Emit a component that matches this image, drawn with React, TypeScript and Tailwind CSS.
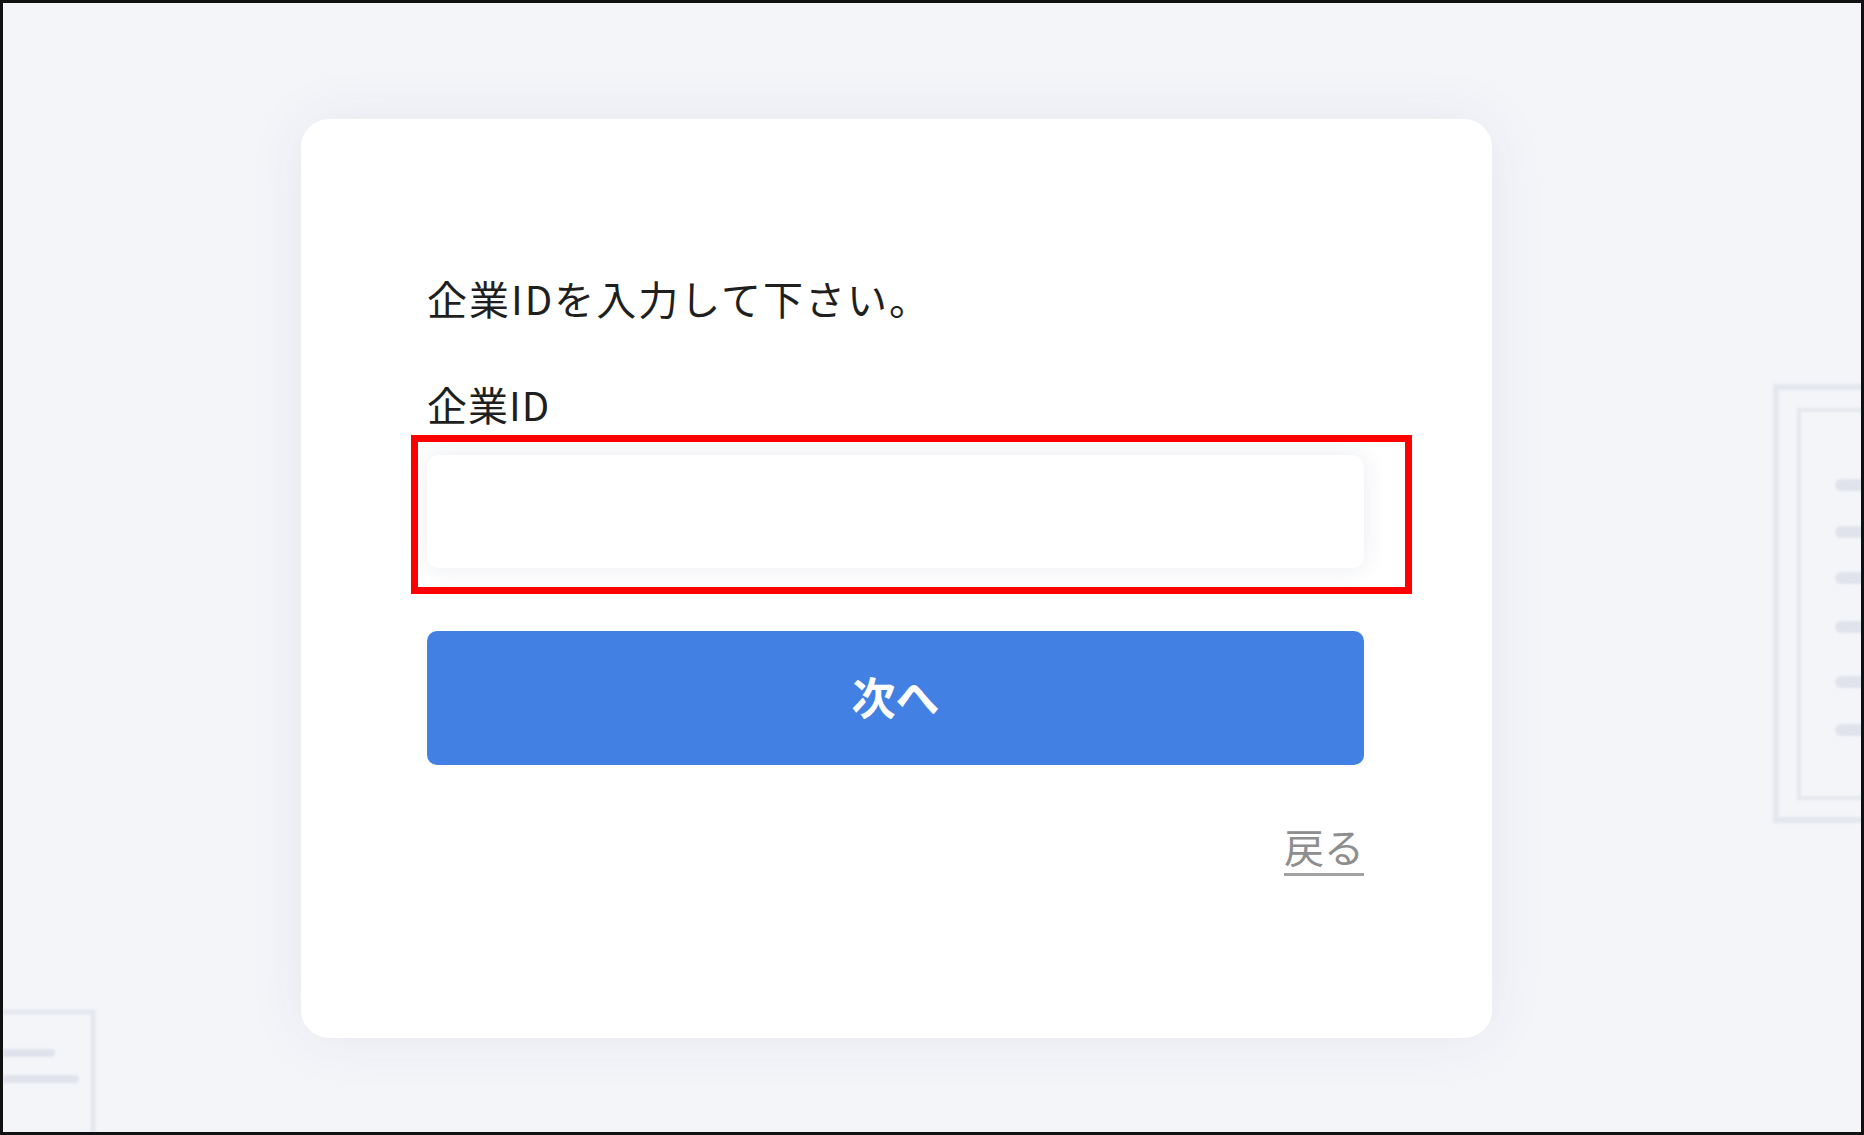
import { useState } from "react";

const font = { fontFamily: '"Noto Sans CJK JP", "Noto Sans", sans-serif' };

const RightDeco = () => (
  <svg
    className="absolute left-[1762px] top-[372px] blur-[1px]"
    width="110"
    height="460"
    viewBox="0 0 110 460"
    fill="none"
  >
    <rect x="11" y="12" width="200" height="433" stroke="#e5e7ef" strokeWidth="6" />
    <rect x="34" y="35" width="200" height="388" stroke="#e5e7ef" strokeWidth="4" />
    {[110, 157, 203, 252, 307, 355].map((y) => (
      <line key={y} x1="76" y1={y} x2="140" y2={y} stroke="#e1e3ec" strokeWidth="12" strokeLinecap="round" />
    ))}
  </svg>
);

const LeftDeco = () => (
  <svg
    className="absolute left-0 top-[997px] blur-[1px]"
    width="110"
    height="140"
    viewBox="0 0 110 140"
    fill="none"
  >
    <rect x="-60" y="12" width="150" height="200" stroke="#e5e7ef" strokeWidth="5" />
    <line x1="-10" y1="53" x2="48" y2="53" stroke="#e1e3ec" strokeWidth="8" strokeLinecap="round" />
    <line x1="-10" y1="79" x2="72" y2="79" stroke="#e1e3ec" strokeWidth="8" strokeLinecap="round" />
  </svg>
);

const App = () => {
  const [companyId, setCompanyId] = useState("");

  return (
    <div
      className="relative w-[1864px] h-[1135px] overflow-hidden border-[3px] border-[#111111] bg-[#f4f5f9]"
      style={font}
    >
      <RightDeco />
      <LeftDeco />

      <div className="relative flex pl-[298px] pt-[116px]">
        <div className="flex flex-col w-[1191px] h-[919px] rounded-[28px] bg-white shadow-[0_0_60px_rgba(40,50,110,0.07)] pt-[151px] pl-[126px] pr-[128px]">
          <p className="text-[40px] leading-[56px] tracking-[2px] text-[#1f1f1f]">企業IDを入力して下さい。</p>

          <label className="block mt-[50px] text-[40px] leading-[56px] tracking-[1px] text-[#1f1f1f]">企業ID</label>

          {/* input with annotation frame */}
          <div className="relative mt-[23px]">
            <input
              value={companyId}
              onChange={(e) => setCompanyId(e.target.value)}
              className="block w-full h-[113px] rounded-[12px] bg-white px-6 text-[36px] outline-none shadow-[0_0_26px_rgba(30,40,100,0.09)]"
            />
            <div className="pointer-events-none absolute -left-[16px] -top-[20px] -right-[48px] -bottom-[26px] border-[7px] border-[#ff0000]" />
          </div>

          <button className="mt-[63px] w-full h-[134px] rounded-[10px] bg-[#4280e3] pb-[4px] text-white text-[44px] font-bold">
            次へ
          </button>

          <div className="flex justify-end mt-[61px]">
            <a className="text-[40px] leading-none text-[#8e8e8e] border-b-[3px] border-[#a3a3a3] pb-[7px] cursor-pointer">
              戻る
            </a>
          </div>
        </div>
      </div>
    </div>
  );
};

export default App;
